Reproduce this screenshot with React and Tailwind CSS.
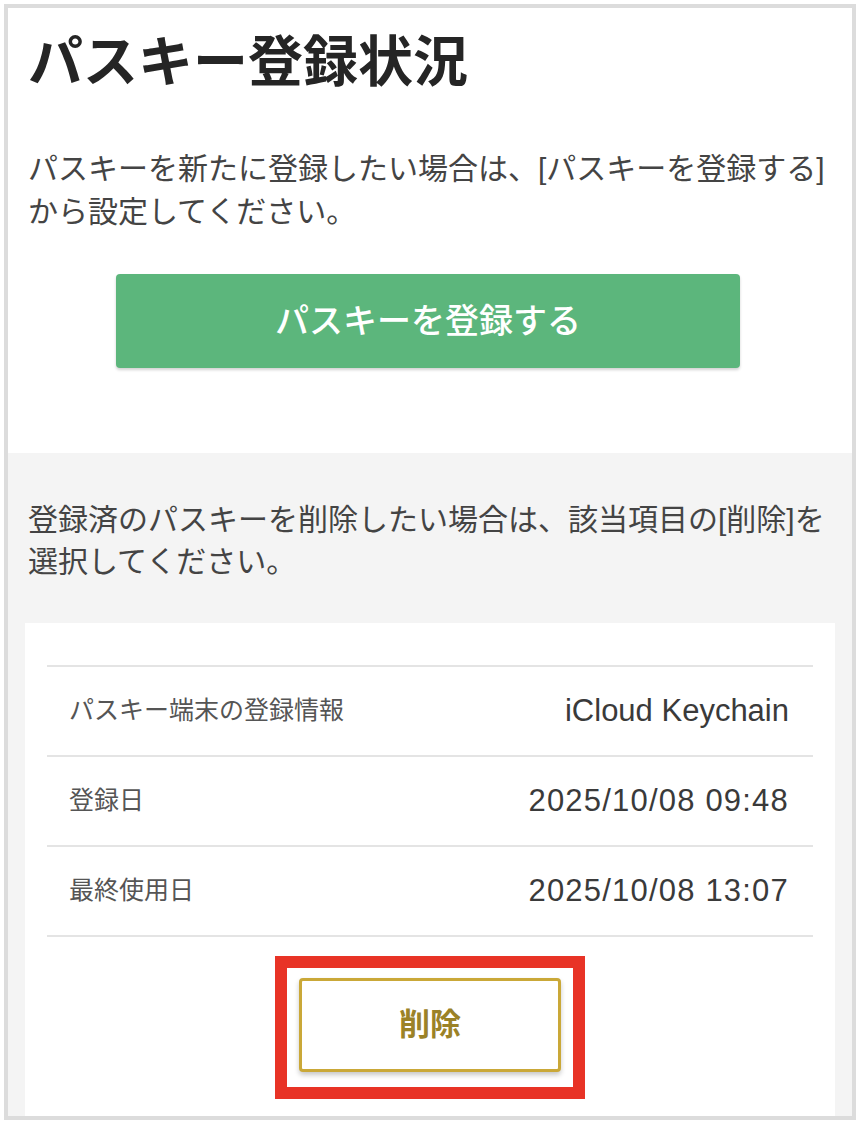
import React from 'react';

const rows = [
  { label: 'パスキー端末の登録情報', value: 'iCloud Keychain', date: false },
  { label: '登録日', value: '2025/10/08 09:48', date: true },
  { label: '最終使用日', value: '2025/10/08 13:07', date: true },
];

export default function App() {
  return (
    <div
      className="bg-white h-[1124px] p-[4px] overflow-hidden"
      style={{ fontFamily: '"Liberation Sans", "Noto Sans CJK JP", sans-serif' }}
    >
      <div className="border-4 border-[#dcdcdc] h-[1116px] flex flex-col overflow-hidden">
        {/* Register section */}
        <section className="bg-white px-[20px] pt-[18px] pb-[85px]">
          <h1 className="text-[55px] leading-[72px] font-bold text-[#252525]">
            パスキー登録状況
          </h1>
          <p className="mt-[49px] text-[30px] leading-[43px] text-[#444] whitespace-nowrap">
            パスキーを新たに登録したい場合は、[パスキーを登録する]
            <br />
            から設定してください。
          </p>
          <div className="mt-[41px] flex justify-center">
            <button className="w-[624px] h-[94px] ml-[-4px] rounded-[4px] bg-[#5cb67c] text-white text-[34px] font-medium shadow-[0_2px_3px_rgba(0,0,0,0.18)]">
              パスキーを登録する
            </button>
          </div>
        </section>

        {/* Registered passkeys */}
        <section className="flex-1 flex flex-col bg-[#f4f4f4] px-[17px] pt-[46px]">
          <p className="pl-[3px] text-[30px] leading-[42px] text-[#444] whitespace-nowrap">
            登録済のパスキーを削除したい場合は、該当項目の[削除]を
            <br />
            選択してください。
          </p>
          <div className="mt-[40px] flex-1 bg-white px-[22px] pt-[42px]">
            <div className="border-b-2 border-[#e4e4e4]">
              {rows.map(({ label, value, date }) => (
                <div
                  key={label}
                  className="h-[90px] border-t-2 border-[#e4e4e4] flex items-center justify-between pl-[22px] pr-[24px]"
                >
                  <span className="text-[25px] text-[#555]">{label}</span>
                  <span className={date ? 'text-[31px] text-[#3a3a3a] tracking-[1.2px]' : 'text-[31px] text-[#3a3a3a]'}>
                    {value}
                  </span>
                </div>
              ))}
            </div>
            <div className="mt-[19px] flex justify-center">
              <div className="border-[12px] border-[#e83326] px-[12px] pt-[10px] pb-[15px]">
                <button className="w-[262px] h-[94px] rounded-[4px] border-[3px] border-[#caa838] bg-white text-[#9b8227] text-[31px] font-bold shadow-[0_3px_5px_rgba(0,0,0,0.22)]">
                  削除
                </button>
              </div>
            </div>
          </div>
        </section>
      </div>
    </div>
  );
}
